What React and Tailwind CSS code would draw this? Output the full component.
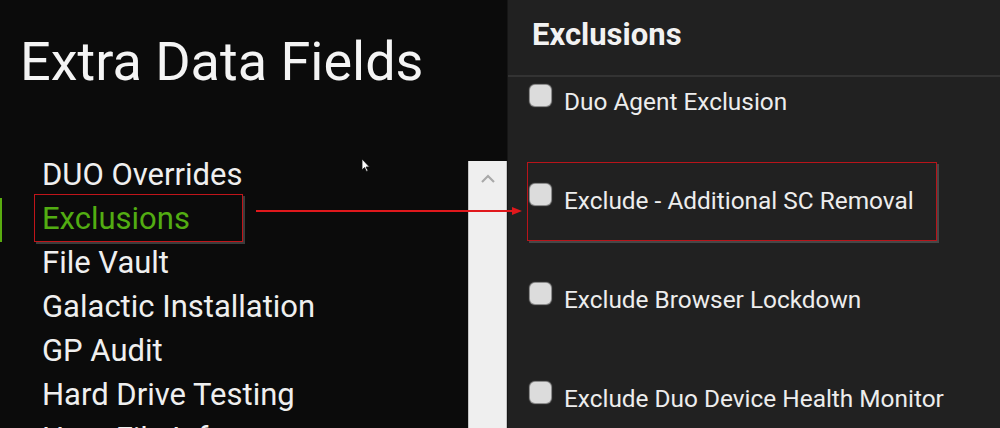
import React from "react";

const leftItems = [
  "DUO Overrides",
  "Exclusions",
  "File Vault",
  "Galactic Installation",
  "GP Audit",
  "Hard Drive Testing",
  "Host File Info",
];

const rightItems = [
  "Duo Agent Exclusion",
  "Exclude - Additional SC Removal",
  "Exclude Browser Lockdown",
  "Exclude Duo Device Health Monitor",
];

export default function App() {
  return (
    <div
      className="relative w-[1000px] h-[428px] overflow-hidden flex"
      style={{ fontFamily: "Roboto, 'Liberation Sans', sans-serif" }}
    >
      {/* Left panel */}
      <div className="w-[507px] h-full bg-[#0b0b0b] flex flex-col">
        <div className="h-[153px] pl-[20px] pt-[31px] shrink-0">
          <h1 className="text-[54px] leading-[62px] text-[#f4f4f4] font-normal">
            Extra Data Fields
          </h1>
        </div>
        <div className="flex flex-1">
          <ul className="flex-1 pl-[42px]">
            {leftItems.map((item) =>
              item === "Exclusions" ? (
                <li
                  key={item}
                  className="relative text-[31px] leading-[44px] text-[#52ad12]"
                >
                  <span className="absolute left-[-42px] top-[1px] w-[2px] h-[44px] bg-[#5aac10]" />
                  <span className="absolute left-[-8px] top-[-3px] w-[209px] h-[48px] border border-[#c0151a] shadow-[2px_2px_0_#3c3c3c]" />
                  {item}
                </li>
              ) : (
                <li
                  key={item}
                  className="text-[31px] leading-[44px] text-[#efefef]"
                >
                  {item}
                </li>
              )
            )}
          </ul>
          <div className="w-[39px] mt-[8px] bg-[#efefef] border-x border-[#c4c4c4] flex justify-center pt-[13px]">
            <svg width="16" height="10" viewBox="0 0 16 10">
              <path
                d="M2 8 L8 2 L14 8"
                fill="none"
                stroke="#a9a9a9"
                strokeWidth="2.2"
              />
            </svg>
          </div>
        </div>
      </div>

      {/* Right panel */}
      <div className="flex-1 h-full bg-[#212121] flex flex-col border-l border-[#161616]">
        <div className="h-[77px] shrink-0 border-b-2 border-[#333333] pl-[24px] pt-[17px]">
          <h2 className="text-[31px] leading-[36px] font-bold text-[#f2f2f2]">
            Exclusions
          </h2>
        </div>
        <ul className="pl-[22px] pt-[8px] flex flex-col gap-[69px]">
          {rightItems.map((item, i) => (
            <li key={item} className="relative flex items-start gap-[13px] h-[30px]">
              {i === 1 && (
                <span className="absolute left-[-3px] top-[-22px] w-[410px] h-[79px] border border-[#b8141a] shadow-[2px_2px_0_#474747]" />
              )}
              <span className="w-[21px] h-[21px] rounded-[5px] bg-[#dcdcdc] shadow-[0_0_1px_1px_#9a9a9a] shrink-0" />
              <span className="text-[24.4px] leading-[30px] mt-[2px] text-[#ededed] whitespace-nowrap">
                {item}
              </span>
            </li>
          ))}
        </ul>
      </div>

      {/* Annotation arrow */}
      <svg
        className="absolute left-[256px] top-[205px]"
        width="268"
        height="12"
        viewBox="0 0 268 12"
      >
        <line x1="0" y1="6" x2="258" y2="6" stroke="#e0181c" strokeWidth="1.8" />
        <path d="M256 2 L266 6 L256 10 Z" fill="#e0181c" />
      </svg>

      {/* Mouse cursor */}
      <svg
        className="absolute left-[361px] top-[158px]"
        width="10"
        height="15"
        viewBox="0 0 10 15"
      >
        <path
          d="M1 1 L1 12 L3.5 9.5 L5.5 13.5 L7 12.8 L5 9 L8.5 9 Z"
          fill="#ffffff"
          stroke="#111111"
          strokeWidth="0.8"
        />
      </svg>
    </div>
  );
}
